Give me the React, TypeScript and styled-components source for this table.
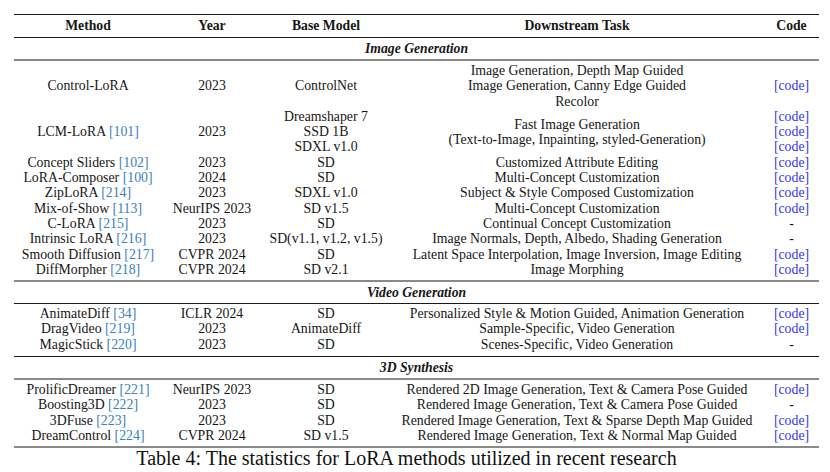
import React from "react";
import styled, { createGlobalStyle } from "styled-components";

const Global = createGlobalStyle`
  html, body { margin: 0; padding: 0; background: #fff; }
  body { font-family: "Liberation Serif", "Times New Roman", serif; color: #161616; }
`;

const COLS = "148px 100px 128px 374px 55px";
const SERIF = `"Liberation Serif", "Times New Roman", serif`;

const Page = styled.div`
  width: 830px;
  height: 472px;
  padding-top: 14px;
  box-sizing: border-box;
  overflow: hidden;
`;

const Table = styled.div`
  width: 805px;
  margin-left: 14px;
  display: flex;
  flex-direction: column;
  font-family: ${SERIF};
`;

const Rule = styled.div<{ $gray?: boolean }>`
  height: ${(p) => (p.$gray ? 2 : 1)}px;
  background: ${(p) => (p.$gray ? "#8a8a8a" : "#1a1a1a")};
`;

const HeaderRow = styled.div`
  display: grid;
  grid-template-columns: ${COLS};
  height: 22px;
  align-items: center;
  font-weight: bold;
  font-size: 13.7px;
  text-align: center;
`;

const SectionTitle = styled.div<{ $h: number }>`
  height: ${(p) => p.$h}px;
  display: flex;
  align-items: center;
  justify-content: center;
  font-weight: bold;
  font-style: italic;
  font-size: 13.7px;
`;

const Group = styled.div<{ $pb: number }>`
  padding-top: 2px;
  padding-bottom: ${(p) => p.$pb}px;
  display: flex;
  flex-direction: column;
`;

const Row = styled.div`
  display: grid;
  grid-template-columns: ${COLS};
  align-items: center;
  font-size: 13.8px;
  line-height: 15.3px;
  text-align: center;
`;

const Cell = styled.div`
  display: flex;
  flex-direction: column;
  align-items: center;
  white-space: nowrap;
`;

const Cite = styled.span`
  color: #3a80c2;
`;

const CodeLink = styled.span`
  color: #3535ee;
`;

const Caption = styled.div`
  font-family: ${SERIF};
  font-size: 20px;
  line-height: 20px;
  text-align: center;
  width: 805px;
  margin-left: 4px;
  color: #111;
`;

type Entry = {
  name: string;
  cite?: string;
  year: string;
  base: string[];
  task: string[];
  code: boolean[];
};

const image: Entry[] = [
  {
    name: "Control-LoRA",
    year: "2023",
    base: ["ControlNet"],
    task: [
      "Image Generation, Depth Map Guided",
      "Image Generation, Canny Edge Guided",
      "Recolor",
    ],
    code: [true],
  },
  {
    name: "LCM-LoRA",
    cite: "101",
    year: "2023",
    base: ["Dreamshaper 7", "SSD 1B", "SDXL v1.0"],
    task: ["Fast Image Generation", "(Text-to-Image, Inpainting, styled-Generation)"],
    code: [true, true, true],
  },
  { name: "Concept Sliders", cite: "102", year: "2023", base: ["SD"], task: ["Customized Attribute Editing"], code: [true] },
  { name: "LoRA-Composer", cite: "100", year: "2024", base: ["SD"], task: ["Multi-Concept Customization"], code: [true] },
  { name: "ZipLoRA", cite: "214", year: "2023", base: ["SDXL v1.0"], task: ["Subject & Style Composed Customization"], code: [true] },
  { name: "Mix-of-Show", cite: "113", year: "NeurIPS 2023", base: ["SD v1.5"], task: ["Multi-Concept Customization"], code: [true] },
  { name: "C-LoRA", cite: "215", year: "2023", base: ["SD"], task: ["Continual Concept Customization"], code: [false] },
  { name: "Intrinsic LoRA", cite: "216", year: "2023", base: ["SD(v1.1, v1.2, v1.5)"], task: ["Image Normals, Depth, Albedo, Shading Generation"], code: [false] },
  { name: "Smooth Diffusion", cite: "217", year: "CVPR 2024", base: ["SD"], task: ["Latent Space Interpolation, Image Inversion, Image Editing"], code: [true] },
  { name: "DiffMorpher", cite: "218", year: "CVPR 2024", base: ["SD v2.1"], task: ["Image Morphing"], code: [true] },
];

const video: Entry[] = [
  { name: "AnimateDiff", cite: "34", year: "ICLR 2024", base: ["SD"], task: ["Personalized Style & Motion Guided, Animation Generation"], code: [true] },
  { name: "DragVideo", cite: "219", year: "2023", base: ["AnimateDiff"], task: ["Sample-Specific, Video Generation"], code: [true] },
  { name: "MagicStick", cite: "220", year: "2023", base: ["SD"], task: ["Scenes-Specific, Video Generation"], code: [false] },
];

const synth: Entry[] = [
  { name: "ProlificDreamer", cite: "221", year: "NeurIPS 2023", base: ["SD"], task: ["Rendered 2D Image Generation, Text & Camera Pose Guided"], code: [true] },
  { name: "Boosting3D", cite: "222", year: "2023", base: ["SD"], task: ["Rendered Image Generation, Text & Camera Pose Guided"], code: [false] },
  { name: "3DFuse", cite: "223", year: "2023", base: ["SD"], task: ["Rendered Image Generation, Text & Sparse Depth Map Guided"], code: [true] },
  { name: "DreamControl", cite: "224", year: "CVPR 2024", base: ["SD v1.5"], task: ["Rendered Image Generation, Text & Normal Map Guided"], code: [true] },
];

function EntryRow({ e }: { e: Entry }) {
  return (
    <Row>
      <Cell>
        <span>
          {e.name}
          {e.cite && (
            <>
              {" "}
              <Cite>[{e.cite}]</Cite>
            </>
          )}
        </span>
      </Cell>
      <Cell>{e.year}</Cell>
      <Cell>
        {e.base.map((b) => (
          <span key={b}>{b}</span>
        ))}
      </Cell>
      <Cell>
        {e.task.map((t) => (
          <span key={t}>{t}</span>
        ))}
      </Cell>
      <Cell>
        {e.code.map((c, i) => (c ? <CodeLink key={i}>[code]</CodeLink> : <span key={i}>-</span>))}
      </Cell>
    </Row>
  );
}

export default function App() {
  return (
    <Page>
      <Global />
      <Table>
        <Rule />
        <HeaderRow>
          <span>Method</span>
          <span>Year</span>
          <span>Base Model</span>
          <span>Downstream Task</span>
          <span>Code</span>
        </HeaderRow>
        <Rule />
        <SectionTitle $h={21}>Image Generation</SectionTitle>
        <Rule $gray />
        <Group $pb={3}>
          {image.map((e) => (
            <EntryRow key={e.name} e={e} />
          ))}
        </Group>
        <Rule $gray />
        <SectionTitle $h={21}>Video Generation</SectionTitle>
        <Rule />
        <Group $pb={4}>
          {video.map((e) => (
            <EntryRow key={e.name} e={e} />
          ))}
        </Group>
        <Rule />
        <SectionTitle $h={21}>3D Synthesis</SectionTitle>
        <Rule $gray />
        <Group $pb={3}>
          {synth.map((e) => (
            <EntryRow key={e.name} e={e} />
          ))}
        </Group>
        <Rule $gray />
      </Table>
      <Caption>Table 4: The statistics for LoRA methods utilized in recent research</Caption>
    </Page>
  );
}
